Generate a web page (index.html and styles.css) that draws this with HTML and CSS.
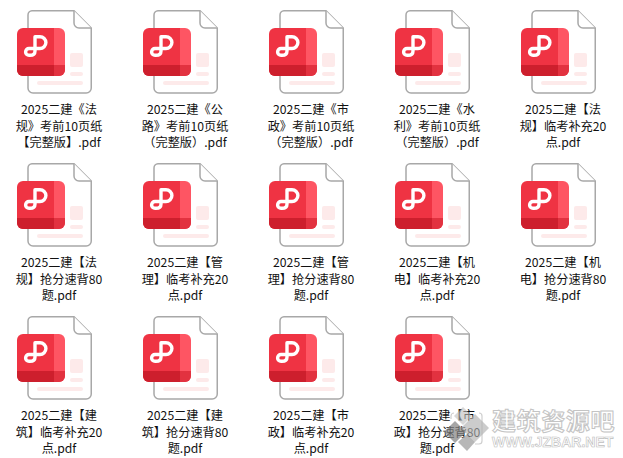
FILE: index.html
```html
<!DOCTYPE html>
<html lang="zh-CN">
<head>
    <meta charset="UTF-8">
    <title>2025二建</title>
    <link rel="stylesheet" href="styles.css">
</head>
<body>
    <svg class="defs" width="0" height="0">
        <symbol id="pdf" viewBox="0 0 84 84">
            <path d="M15 .75H57L74.25 18V78a5 5 0 0 1-5 5H16a5 5 0 0 1-5-5V5a4.250 4.250 0 0 1 4-4.250Z" fill="#fff" stroke="#a8a8a8" stroke-width="1.500"/>
            <path d="M57 .75V13a5 5 0 0 0 5 5H74.250" fill="#fff" stroke="#a8a8a8" stroke-width="1.500"/>
            <rect x="53" y="43" width="13" height="14" rx="2" fill="#fdeaea"/>
            <rect x="53" y="62" width="13" height="4" rx="2" fill="#fdeaea"/>
            <rect x="20" y="71" width="46" height="4" rx="2" fill="#fdeaea"/>
            <path d="M6 18H37V66H6a6 6 0 0 1-6-6V24a6 6 0 0 1 6-6Z" fill="#ef3343"/>
            <path d="M37 18H42a6 6 0 0 1 6 6V60a6 6 0 0 1-6 6H37Z" fill="#fe5563"/>
            <path d="M0 55H37V66H6a6 6 0 0 1-6-6Z" fill="#cd1f2d"/>
            <path d="M37 55H48V60a6 6 0 0 1-6 6H37Z" fill="#e23240"/>
            <path d="M18 41V26.700H23A5.900 5.900 0 0 1 23 38.500H12A3.400 3.400 0 0 0 12 45.300H13C16 45.300 18 44 18 41Z" fill="none" stroke="#fff" stroke-width="3.400" stroke-linejoin="round"/>
        </symbol>
    </svg>

    <div class="grid">
        <div class="file"><svg class="icon"><use href="#pdf"/></svg><p>2025二建《法<br>规》考前10页纸<br>【完整版】.pdf</p></div>
        <div class="file"><svg class="icon"><use href="#pdf"/></svg><p>2025二建《公<br>路》考前10页纸<br>（完整版）.pdf</p></div>
        <div class="file"><svg class="icon"><use href="#pdf"/></svg><p>2025二建《市<br>政》考前10页纸<br>（完整版）.pdf</p></div>
        <div class="file"><svg class="icon"><use href="#pdf"/></svg><p>2025二建《水<br>利》考前10页纸<br>（完整版）.pdf</p></div>
        <div class="file"><svg class="icon"><use href="#pdf"/></svg><p>2025二建【法<br>规】临考补充20<br>点.pdf</p></div>

        <div class="file"><svg class="icon"><use href="#pdf"/></svg><p>2025二建【法<br>规】抢分速背80<br>题.pdf</p></div>
        <div class="file"><svg class="icon"><use href="#pdf"/></svg><p>2025二建【管<br>理】临考补充20<br>点.pdf</p></div>
        <div class="file"><svg class="icon"><use href="#pdf"/></svg><p>2025二建【管<br>理】抢分速背80<br>题.pdf</p></div>
        <div class="file"><svg class="icon"><use href="#pdf"/></svg><p>2025二建【机<br>电】临考补充20<br>点.pdf</p></div>
        <div class="file"><svg class="icon"><use href="#pdf"/></svg><p>2025二建【机<br>电】抢分速背80<br>题.pdf</p></div>

        <div class="file"><svg class="icon"><use href="#pdf"/></svg><p>2025二建【建<br>筑】临考补充20<br>点.pdf</p></div>
        <div class="file"><svg class="icon"><use href="#pdf"/></svg><p>2025二建【建<br>筑】抢分速背80<br>题.pdf</p></div>
        <div class="file"><svg class="icon"><use href="#pdf"/></svg><p>2025二建【市<br>政】临考补充20<br>点.pdf</p></div>
        <div class="file"><svg class="icon"><use href="#pdf"/></svg><p>2025二建【市<br>政】抢分速背80<br>题.pdf</p></div>
    </div>

    <!-- watermark -->
    <div class="mark">
        <svg class="mark-logo" viewBox="0 0 47 47">
            <path d="M11 8a3 3 0 0 0-3 3V14M36 8a3 3 0 0 1 3 3V36a3 3 0 0 1-3 3H32" fill="none" stroke="#cfcfcf" stroke-width="1.200"/>
            <path d="M20 2 29 11 20 20 11 11Z" fill="#bdbdbd" fill-opacity=".6"/>
            <path d="M32 9 46 23 32 37 18 23Z" fill="#b0b0b0" fill-opacity=".65"/>
            <path d="M12 16 23 27 12 38 1 27Z" fill="#808080" fill-opacity=".7"/>
            <path d="M24 29 32 37 24 46 15 37Z" fill="#999" fill-opacity=".7"/>
        </svg>
        <div class="mark-text">
            <div class="mark-cn">建筑资源吧</div>
            <div class="mark-en">WWW.JZBAR.NET</div>
        </div>
    </div>
</body>
</html>
```

FILE: styles.css
```css
body {
    margin: 0;
    height: 458px;
    overflow: hidden;
    background: #fff;
    color: #111;
    font-family: "Noto Sans CJK SC", "Noto Sans", sans-serif;
    font-size: 12.200px;
}
.defs {
    display: block;
    height: 0;
}
.grid {
    display: grid;
    grid-template-columns: repeat(5, 118px);
    grid-auto-rows: 153px;
    column-gap: 8px;
    padding-top: 10px;
}
.file {
    text-align: center;
}
.icon {
    display: block;
    width: 84px;
    height: 84px;
    margin: 0 auto;
}
.file p {
    margin: 7px 0 0;
    line-height: 16.500px;
    white-space: nowrap;
}
.mark {
    position: absolute;
    left: 443px;
    top: 405px;
    display: flex;
    align-items: center;
    gap: 2px;
    white-space: nowrap;
}
.mark-logo {
    flex: none;
    width: 47px;
    height: 47px;
}
.mark-cn {
    font-family: "Noto Sans CJK SC", sans-serif;
    font-weight: 700;
    font-size: 24px;
    line-height: 26px;
    letter-spacing: 0.6px;
    color: #fff;
    -webkit-text-stroke: 1px #c4c4c4;
}
.mark-en {
    font-family: "Liberation Sans", sans-serif;
    font-weight: 700;
    font-size: 14px;
    line-height: 18px;
    color: #fff;
    -webkit-text-stroke: 0.6px #bdbdbd;
}
```
